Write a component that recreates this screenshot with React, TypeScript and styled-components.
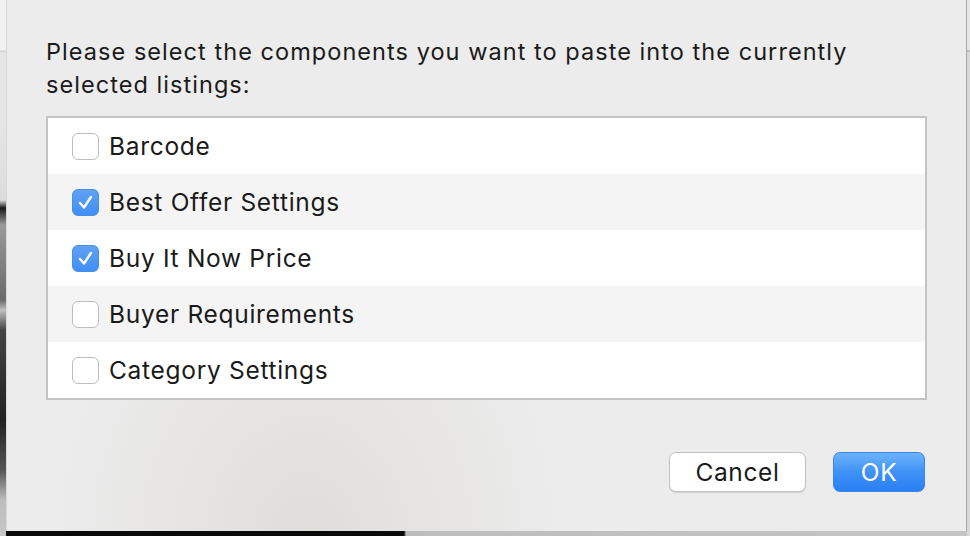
import { useState } from 'react';
import styled, { createGlobalStyle } from 'styled-components';

const GlobalStyle = createGlobalStyle`
  html, body {
    margin: 0;
    padding: 0;
    width: 970px;
    height: 536px;
    overflow: hidden;
    background: #2a2a2a;
  }
  body {
    font-family: Inter, "Helvetica Neue", "Liberation Sans", sans-serif;
    -webkit-font-smoothing: antialiased;
  }
`;

const items = [
  { name: 'Barcode', checked: false },
  { name: 'Best Offer Settings', checked: true },
  { name: 'Buy It Now Price', checked: true },
  { name: 'Buyer Requirements', checked: false },
  { name: 'Category Settings', checked: false },
];

function CheckMark() {
  return (
    <svg width="19" height="19" viewBox="0 0 19 19">
      <path d="M4 10 L8 14.5 L15 4" fill="none" stroke="#fff" strokeWidth="2.4" strokeLinecap="round" strokeLinejoin="round" />
    </svg>
  );
}

export default function App() {
  const [state, setState] = useState(items.map(i => i.checked));

  const toggle = (idx: number) => {
    setState(s => s.map((v, i) => (i === idx ? !v : v)));
  };

  return (
    <>
      <GlobalStyle />
      <Page>
        <LeftStrip />
        <Middle>
          <Sheet>
            <Prompt>
              Please select the components you want to paste into the currently selected listings:
            </Prompt>
            <List>
              {items.map((item, idx) => (
                <Row key={item.name} $alt={idx % 2 === 1} onClick={() => toggle(idx)}>
                  <Box $checked={state[idx]}>{state[idx] && <CheckMark />}</Box>
                  <Label>{item.name}</Label>
                </Row>
              ))}
            </List>
            <Footer>
              <CancelButton>Cancel</CancelButton>
              <OkButton>OK</OkButton>
            </Footer>
          </Sheet>
          <BottomStrip />
        </Middle>
        <RightStrip />
      </Page>
    </>
  );
}

const Page = styled.div`
  display: flex;
  width: 970px;
  height: 536px;
`;

const LeftStrip = styled.div`
  width: 6px;
  background: linear-gradient(
    180deg,
    #f2f2f2 0px,
    #f2f2f2 50px,
    #c8c8c8 51px,
    #e6e6e6 52px,
    #e6e6e6 120px,
    #dcdcdc 200px,
    #1a1a1a 208px,
    #9a9a9a 225px,
    #6a6a6a 300px,
    #c0c0c0 310px,
    #444 330px,
    #222 420px,
    #555 470px,
    #bdbdbd 500px,
    #c6c6c6 536px
  );
`;

const Middle = styled.div`
  display: flex;
  flex-direction: column;
  width: 961px;
`;

const Sheet = styled.div`
  box-sizing: border-box;
  height: 531px;
  padding: 35px 40px 0 39px;
  background:
    radial-gradient(ellipse 260px 320px at 300px 540px, rgba(214, 210, 206, 0.55), rgba(236, 236, 236, 0) 100%),
    #ececec;
  border-right: 1px solid #a8a8a8;
  border-left: 1px solid #d8d8d8;
  display: flex;
  flex-direction: column;
`;

const Prompt = styled.p`
  margin: 0 0 15px 0;
  width: 850px;
  font-size: 23.5px;
  line-height: 33px;
  color: #1a1a1a;
  letter-spacing: 1.05px;
`;

const List = styled.div`
  width: 881px;
  background: #fff;
  border: 2px solid #c4c4c4;
  box-sizing: border-box;
  display: flex;
  flex-direction: column;
`;

const Row = styled.div<{ $alt: boolean }>`
  height: 56px;
  display: flex;
  align-items: center;
  padding-left: 24px;
  background: ${({ $alt }) => ($alt ? '#f4f4f4' : '#ffffff')};
  cursor: default;
`;

const Box = styled.div<{ $checked: boolean }>`
  width: 27px;
  height: 27px;
  box-sizing: border-box;
  border-radius: 6px;
  display: flex;
  align-items: center;
  justify-content: center;
  background: ${({ $checked }) => ($checked ? 'linear-gradient(180deg, #5fa2f6, #3f8ef3)' : '#ffffff')};
  border: ${({ $checked }) => ($checked ? '1px solid #4a8ee6' : '1px solid #bdbdbd')};
  margin-right: 10px;
`;

const Label = styled.span`
  font-size: 24.5px;
  color: #1a1a1a;
  letter-spacing: 0.7px;
`;

const Footer = styled.div`
  display: flex;
  justify-content: flex-end;
  gap: 27px;
  margin-top: 52px;
  width: 879px;
`;

const ButtonBase = styled.button`
  height: 40px;
  border-radius: 7px;
  font-family: inherit;
  font-size: 24.5px;
  letter-spacing: 0.6px;
  padding: 0;
  cursor: pointer;
`;

const CancelButton = styled(ButtonBase)`
  width: 137px;
  background: #ffffff;
  color: #1a1a1a;
  border: 1px solid #c2c2c2;
  box-shadow: 0 1px 1px rgba(0, 0, 0, 0.12);
`;

const OkButton = styled(ButtonBase)`
  width: 92px;
  color: #ffffff;
  background: linear-gradient(180deg, #6db3fb 0%, #3f92f6 50%, #2a7ff4 100%);
  border: 1px solid #3a85ee;
`;

const BottomStrip = styled.div`
  flex: 1;
  background: linear-gradient(90deg, #0a0a0a 0px, #0a0a0a 398px, #bdbdbd 400px, #c4c4c4 961px);
`;

const RightStrip = styled.div`
  width: 3px;
  background: linear-gradient(180deg, #e6e6e6 0px, #e6e6e6 50px, #a0a0a0 51px, #d8d8d8 52px, #d8d8d8 536px);
`;
